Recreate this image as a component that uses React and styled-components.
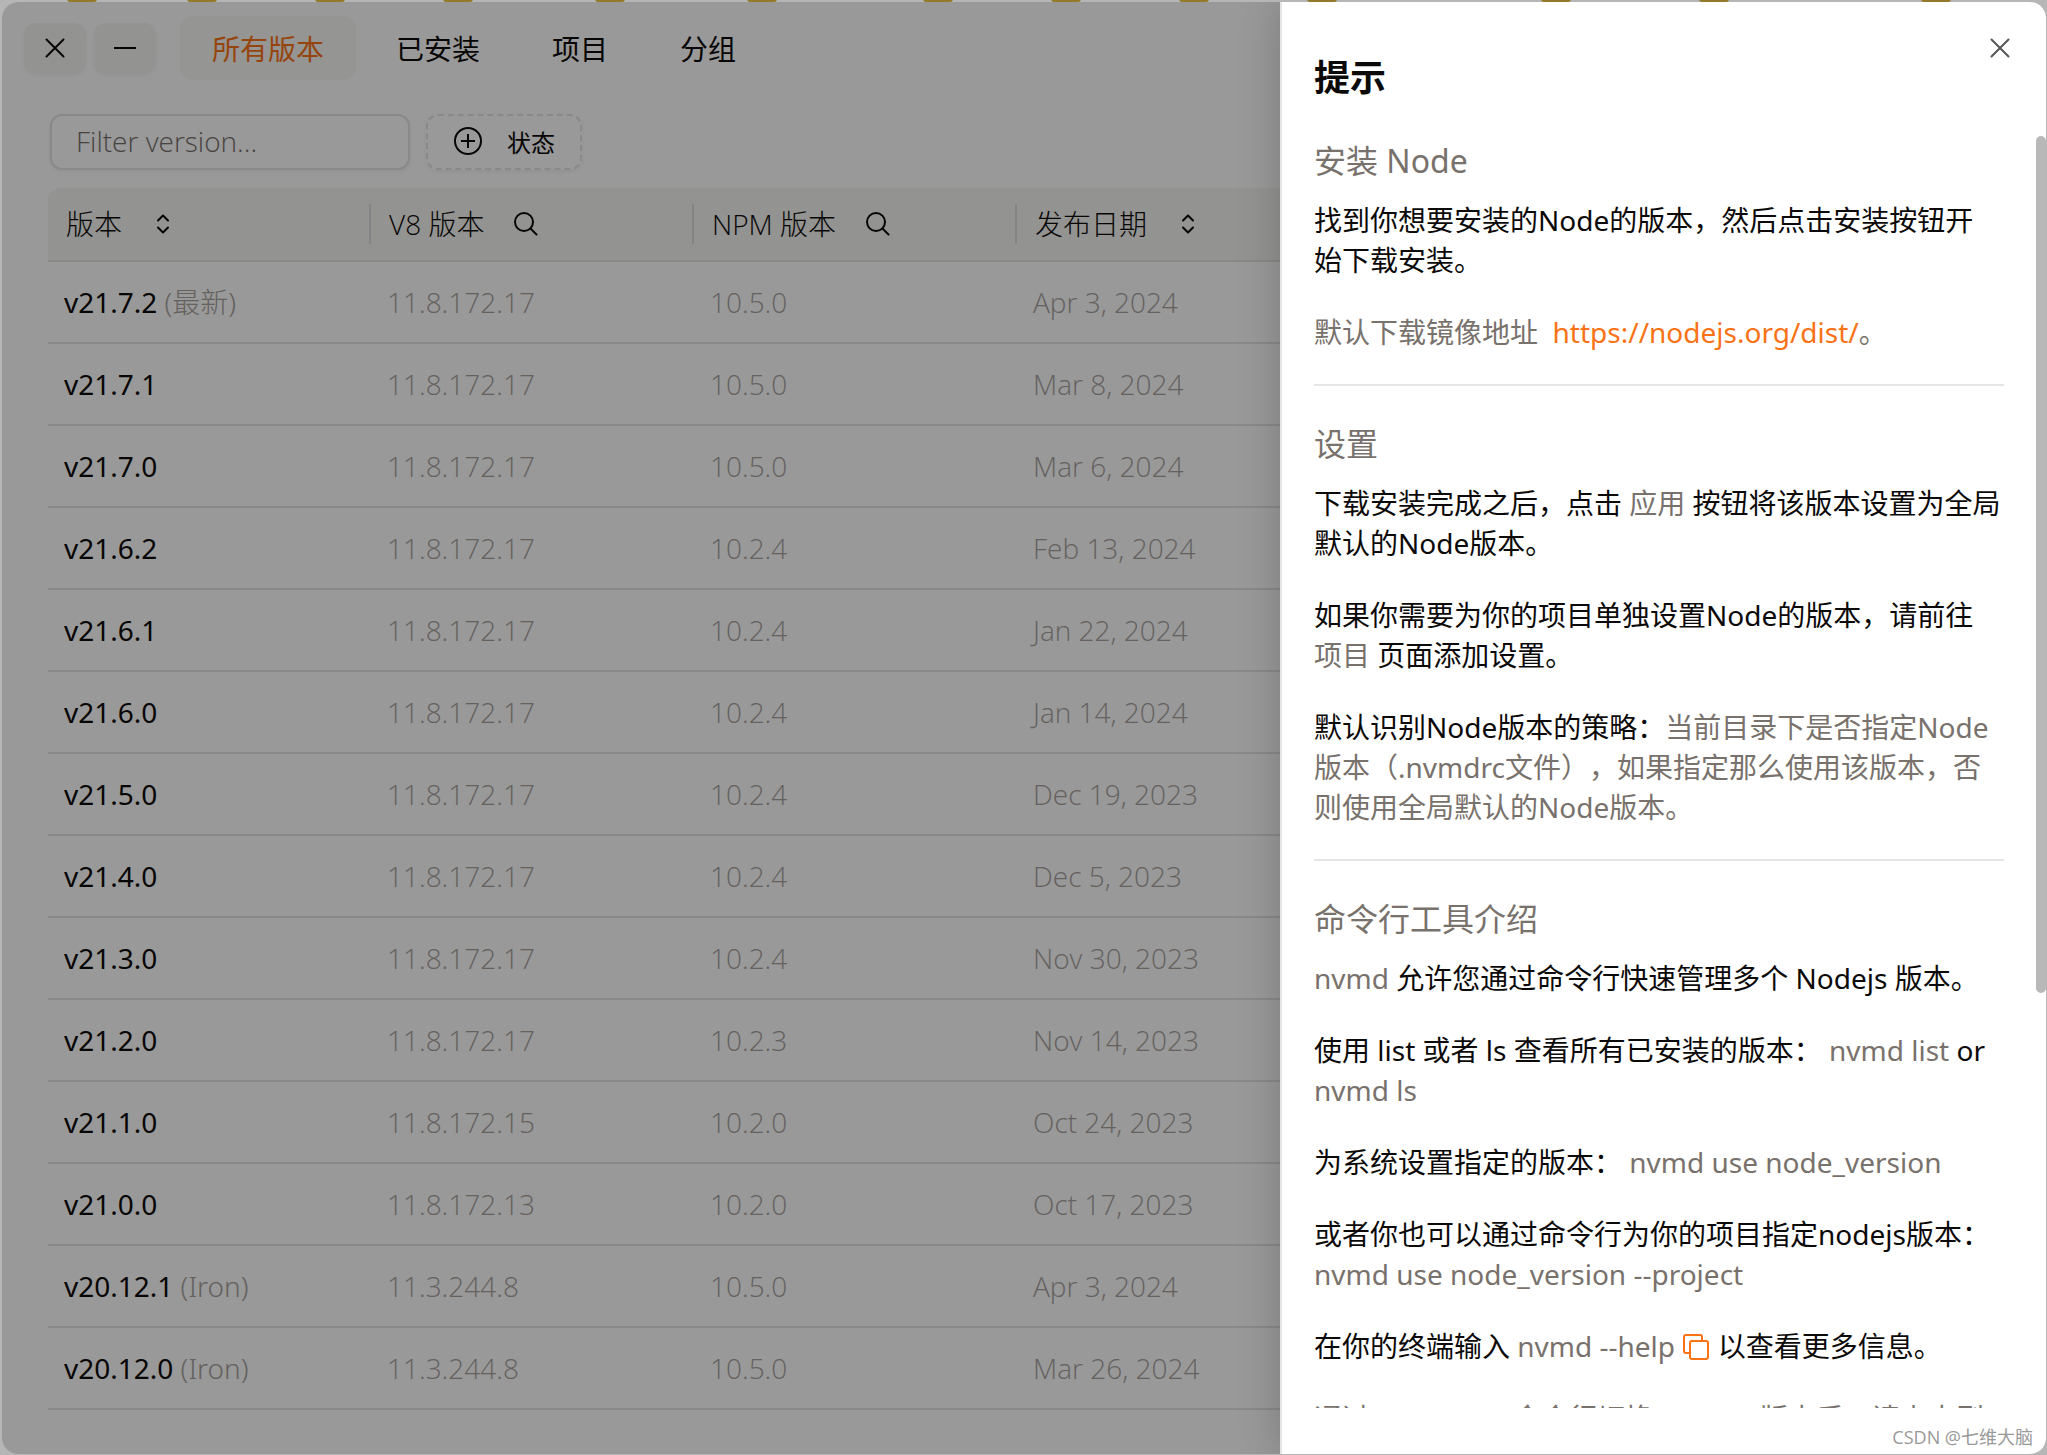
import React from "react";
import styled, { createGlobalStyle } from "styled-components";

const sans = `"Open Sans", "Noto Sans CJK SC", sans-serif`;
const sansWide = `"Noto Sans", "Noto Sans CJK SC", sans-serif`;

const versions = [
  { version: "v21.7.2", tag: "(最新)", v8: "11.8.172.17", npm: "10.5.0", date: "Apr 3, 2024" },
  { version: "v21.7.1", v8: "11.8.172.17", npm: "10.5.0", date: "Mar 8, 2024" },
  { version: "v21.7.0", v8: "11.8.172.17", npm: "10.5.0", date: "Mar 6, 2024" },
  { version: "v21.6.2", v8: "11.8.172.17", npm: "10.2.4", date: "Feb 13, 2024" },
  { version: "v21.6.1", v8: "11.8.172.17", npm: "10.2.4", date: "Jan 22, 2024" },
  { version: "v21.6.0", v8: "11.8.172.17", npm: "10.2.4", date: "Jan 14, 2024" },
  { version: "v21.5.0", v8: "11.8.172.17", npm: "10.2.4", date: "Dec 19, 2023" },
  { version: "v21.4.0", v8: "11.8.172.17", npm: "10.2.4", date: "Dec 5, 2023" },
  { version: "v21.3.0", v8: "11.8.172.17", npm: "10.2.4", date: "Nov 30, 2023" },
  { version: "v21.2.0", v8: "11.8.172.17", npm: "10.2.3", date: "Nov 14, 2023" },
  { version: "v21.1.0", v8: "11.8.172.15", npm: "10.2.0", date: "Oct 24, 2023" },
  { version: "v21.0.0", v8: "11.8.172.13", npm: "10.2.0", date: "Oct 17, 2023" },
  { version: "v20.12.1", tag: "(Iron)", v8: "11.3.244.8", npm: "10.5.0", date: "Apr 3, 2024" },
  { version: "v20.12.0", tag: "(Iron)", v8: "11.3.244.8", npm: "10.5.0", date: "Mar 26, 2024" },
];

const tabs = ["所有版本", "已安装", "项目", "分组"];

// tabs of the window behind, only their lower edge peeks out
const backTabs = [67, 187, 315, 443, 595, 747, 923, 1051, 1179, 1307, 1541, 1699, 1921];

const CrossIcon = () => (
  <svg width="20" height="20" viewBox="0 0 20 20" fill="none" stroke="currentColor" strokeWidth="2" strokeLinecap="round">
    <path d="M1.5 1.5l17 17M18.5 1.5l-17 17" />
  </svg>
);

const MinusIcon = () => (
  <svg width="22" height="20" viewBox="0 0 22 20" fill="none" stroke="currentColor" strokeWidth="2">
    <path d="M0 10h22" />
  </svg>
);

const PlusCircleIcon = () => (
  <svg width="30" height="30" viewBox="0 0 30 30" fill="none" stroke="currentColor" strokeWidth="2">
    <circle cx="15" cy="15" r="13" />
    <path d="M15 8v14M8 15h14" />
  </svg>
);

const SortIcon = () => (
  <svg width="30" height="30" viewBox="0 0 30 30" fill="none" stroke="currentColor" strokeWidth="2" strokeLinecap="round" strokeLinejoin="round">
    <path d="M10 11.5l5-5 5 5M10 18.5l5 5 5-5" />
  </svg>
);

const SearchIcon = () => (
  <svg width="30" height="30" viewBox="0 0 30 30" fill="none" stroke="currentColor" strokeWidth="2" strokeLinecap="round">
    <circle cx="14" cy="13" r="9" />
    <path d="M20.5 19.5l6 6" />
  </svg>
);

const CopyIcon = () => (
  <svg width="28" height="28" viewBox="0 0 28 28" fill="none" stroke="currentColor" strokeWidth="2" strokeLinejoin="round">
    <path d="M8 20H4a2 2 0 0 1-2-2V4a2 2 0 0 1 2-2h14a2 2 0 0 1 2 2v4" />
    <rect x="8" y="8" width="18" height="18" rx="2" />
  </svg>
);

const App = () => {
  return (
    <>
      <GlobalStyle />
      <Desktop>
        <BackTabs aria-hidden="true">
          {backTabs.map((x) => (
            <rect key={x} x={x} y="-8" width="30" height="10" rx="3" />
          ))}
        </BackTabs>
        <Window>
          <Page>
            <TitleBar>
              <WindowButtons>
                <WindowButton aria-label="关闭窗口">
                  <CrossIcon />
                </WindowButton>
                <WindowButton aria-label="最小化">
                  <MinusIcon />
                </WindowButton>
              </WindowButtons>
              <Tabs>
                {tabs.map((tab, i) => (
                  <Tab key={tab} href="#" $active={i === 0}>
                    {tab}
                  </Tab>
                ))}
              </Tabs>
            </TitleBar>
            <Toolbar>
              <FilterInput aria-label="Filter version" placeholder="Filter version..." />
              <StatusButton>
                <PlusCircleIcon />
                状态
              </StatusButton>
            </Toolbar>
            <VersionTable>
              <thead>
                <tr>
                  <HeadCell>
                    <HeadLabel>
                      版本 <SortIcon />
                    </HeadLabel>
                  </HeadCell>
                  <HeadCell>
                    <HeadLabel>
                      V8 版本 <SearchIcon />
                    </HeadLabel>
                  </HeadCell>
                  <HeadCell>
                    <HeadLabel>
                      NPM 版本 <SearchIcon />
                    </HeadLabel>
                  </HeadCell>
                  <HeadCell>
                    <HeadLabel>
                      发布日期 <SortIcon />
                    </HeadLabel>
                  </HeadCell>
                </tr>
              </thead>
              <tbody>
                {versions.map((row) => (
                  <tr key={row.version}>
                    <VersionCell>
                      {row.version} {row.tag && <Tag>{row.tag}</Tag>}
                    </VersionCell>
                    <Cell>{row.v8}</Cell>
                    <Cell>{row.npm}</Cell>
                    <Cell>{row.date}</Cell>
                  </tr>
                ))}
              </tbody>
            </VersionTable>
          </Page>
          <Overlay />
          <Drawer role="dialog" aria-labelledby="tips-title">
            <CloseButton aria-label="关闭">
              <CrossIcon />
            </CloseButton>
            <DrawerTitle id="tips-title">提示</DrawerTitle>
            <DrawerBody>
              <Section>
                <SectionTitle>安装 Node</SectionTitle>
                <Text>找到你想要安装的Node的版本，然后点击安装按钮开始下载安装。</Text>
                <Text $muted>
                  默认下载镜像地址&nbsp; <Link href="https://nodejs.org/dist/">https://nodejs.org/dist/</Link>。
                </Text>
              </Section>
              <Section>
                <SectionTitle>设置</SectionTitle>
                <Text>
                  下载安装完成之后，点击 <Muted>应用</Muted> 按钮将该版本设置为全局默认的Node版本。
                </Text>
                <Text>
                  如果你需要为你的项目单独设置Node的版本，请前往 <Muted>项目</Muted> 页面添加设置。
                </Text>
                <Text>
                  默认识别Node版本的策略：
                  <Muted>当前目录下是否指定Node版本（.nvmdrc文件），如果指定那么使用该版本，否则使用全局默认的Node版本。</Muted>
                </Text>
              </Section>
              <Section>
                <SectionTitle>命令行工具介绍</SectionTitle>
                <Text>
                  <Muted>nvmd</Muted> 允许您通过命令行快速管理多个 Nodejs 版本。
                </Text>
                <Text>
                  使用 list 或者 ls 查看所有已安装的版本： <Muted>nvmd list</Muted> or <Muted>nvmd ls</Muted>
                </Text>
                <Text>
                  为系统设置指定的版本： <Muted>nvmd use node_version</Muted>
                </Text>
                <Text>
                  或者你也可以通过命令行为你的项目指定nodejs版本： <Muted>nvmd use node_version --project</Muted>
                </Text>
                <Text>
                  在你的终端输入 <Muted>nvmd --help</Muted>{" "}
                  <CopyButton aria-label="复制">
                    <CopyIcon />
                  </CopyButton>{" "}
                  以查看更多信息。
                </Text>
                <Text $muted>通过 nvmd use 命令行切换 Nodejs 版本后，请点击刷新按钮。</Text>
              </Section>
            </DrawerBody>
            <ScrollThumb />
          </Drawer>
        </Window>
        <Watermark>CSDN @七维大脑</Watermark>
      </Desktop>
    </>
  );
};

const GlobalStyle = createGlobalStyle`
  * {
    box-sizing: border-box;
  }
  body {
    margin: 0;
    font-family: ${sans};
    font-size: 28px;
    line-height: 40px;
    color: #0c0a09;
    text-spacing-trim: space-all;
  }
  button, input {
    font-family: inherit;
    color: inherit;
  }
  svg {
    display: block;
    flex-shrink: 0;
  }
`;

const Desktop = styled.div`
  position: relative;
  display: flex;
  height: 100vh;
  padding: 2px 1px 1px 2px;
  background: #b6b6b6;
`;
const BackTabs = styled.svg`
  position: absolute;
  top: 0;
  left: 0;
  width: 100%;
  height: 2px;
  fill: #937a2b;
`;
const Window = styled.div`
  position: relative;
  flex: 1;
  min-width: 0;
  border-radius: 16px;
  overflow: hidden;
  background: white;
`;

const Page = styled.div`
  padding: 14px 46px;
`;
const TitleBar = styled.header`
  display: flex;
  align-items: center;
  gap: 24px;
  margin-left: -24px;
`;
const WindowButtons = styled.div`
  display: flex;
  gap: 8px;
`;
const WindowButton = styled.button`
  display: flex;
  align-items: center;
  justify-content: center;
  width: 62px;
  height: 50px;
  border: 0;
  border-radius: 12px;
  background: #f5f5f4;
  box-shadow: 0 2px 4px rgba(0, 0, 0, 0.05);
`;
const Tabs = styled.nav`
  display: flex;
  gap: 8px;
`;
const Tab = styled.a`
  padding: 13px 32px 11px;
  border-radius: 12px;
  text-decoration: none;
  color: ${({ $active }) => ($active ? "#f97316" : "inherit")};
  background: ${({ $active }) => ($active ? "#f8f8f5" : "none")};
`;

const Toolbar = styled.div`
  display: flex;
  gap: 16px;
  margin: 34px 0 18px 2px;
`;
const FilterInput = styled.input`
  width: 360px;
  height: 56px;
  padding: 0 24px 2px;
  border: 2px solid #e4e4e4;
  border-radius: 12px;
  background: none;
  font-size: 28px;
  font-weight: 300;
  box-shadow: 0 2px 4px rgba(0, 0, 0, 0.05);
  &::placeholder {
    color: #78716c;
    opacity: 1;
  }
`;
const StatusButton = styled.button`
  display: flex;
  align-items: center;
  gap: 24px;
  height: 56px;
  padding: 0 25px 2px;
  border: 2px dashed #e4e4e4;
  border-radius: 12px;
  background: none;
  font-size: 24px;
  box-shadow: 0 2px 4px rgba(0, 0, 0, 0.05);
`;

const VersionTable = styled.table`
  width: 100%;
  table-layout: fixed;
  border-collapse: separate;
  border-spacing: 0;
  text-align: left;
`;
const HeadCell = styled.th`
  width: 323px;
  height: 74px;
  padding: 0;
  border-bottom: 2px solid #e7e5e4;
  background: #f5f5f2;
  font-weight: 300;
  &:first-child {
    border-top-left-radius: 12px;
  }
  &:last-child {
    width: auto;
  }
`;
const HeadLabel = styled.div`
  display: flex;
  align-items: center;
  gap: 26px;
  padding-left: 18px;
  border-right: 2px solid #dadade;
`;
const Cell = styled.td`
  height: 82px;
  padding: 0 16px;
  border-bottom: 2px solid #e7e5e4;
  font-weight: 300;
  color: #a8a29e;
`;
const VersionCell = styled(Cell)`
  font-family: ${sansWide};
  font-weight: 400;
  color: inherit;
`;
const Tag = styled.span`
  font-weight: 300;
  color: #a8a29e;
`;

const Overlay = styled.div`
  position: absolute;
  inset: 0;
  background: rgba(0, 0, 0, 0.4);
`;
const Drawer = styled.aside`
  position: absolute;
  top: 0;
  right: 0;
  bottom: 0;
  display: flex;
  flex-direction: column;
  width: 766px;
  padding: 50px 42px 46px 32px;
  border-left: 2px solid #e5e5e5;
  background: white;
  box-shadow: 0 0 40px rgba(0, 0, 0, 0.2);
  font-family: ${sansWide};
`;
const DrawerTitle = styled.h1`
  margin: 0;
  font-size: 36px;
  line-height: 52px;
`;
const CloseButton = styled.button`
  position: absolute;
  top: 30px;
  right: 30px;
  padding: 6px;
  border: 0;
  background: none;
  color: #555;
`;
const DrawerBody = styled.div`
  flex: 1;
  min-height: 0;
  margin-top: 33px;
  overflow: hidden;
`;
const Section = styled.section`
  & + & {
    margin-top: 32px;
    padding-top: 34px;
    border-top: 2px solid #e5e5e5;
  }
`;
const SectionTitle = styled.h2`
  margin: 0 0 15px;
  font-size: 32px;
  line-height: 48px;
  font-weight: 400;
  color: #78716c;
`;
const Text = styled.p`
  margin: 0;
  padding-right: 3px;
  color: ${({ $muted }) => ($muted ? "#78716c" : "inherit")};
  & + & {
    margin-top: 32px;
  }
`;
const Muted = styled.span`
  color: #78716c;
`;
const Link = styled.a`
  color: #f97316;
  text-decoration: none;
`;
const CopyButton = styled.button`
  padding: 0;
  border: 0;
  background: none;
  color: #f97316;
  vertical-align: -4px;
`;
const ScrollThumb = styled.div`
  position: absolute;
  top: 134px;
  right: 0;
  width: 10px;
  height: 59%;
  border-radius: 5px;
  background: #b8b8b8;
`;

const Watermark = styled.div`
  position: absolute;
  right: 14px;
  bottom: 4px;
  font-size: 18px;
  line-height: 28px;
  color: #999;
`;

export default App;
